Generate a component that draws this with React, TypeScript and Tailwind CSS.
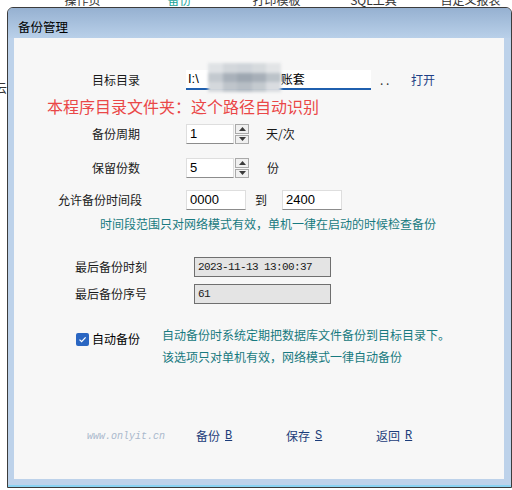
import React from "react";

const tabs = [
  { label: "操作页", active: false },
  { label: "备份", active: true },
  { label: "打印模板", active: false },
  { label: "SQL工具", active: false },
  { label: "自定义报表", active: false },
];

// pixelated cover over the private part of the path
const mosaic = [
  "#dfe2e5", "#d3d7db", "#cfd4d9", "#d6dadd", "#e2e4e6",
  "#c3c9cf", "#a9b1ba", "#9ea7b1", "#a7afb8", "#bcc3c9",
  "#d4d8dc", "#bfc5cb", "#b7bec5", "#c4cacf", "#d9dce0",
];

function SpinBox({ value }: { value: string }) {
  return (
    <div className="flex h-[20px] items-stretch">
      <div className="flex w-[48px] items-center border border-[#dedede] border-b-[#8c8c8c] bg-white pl-[3px] font-['Liberation_Sans',sans-serif] text-[13px] text-black">
        {value}
      </div>
      <div className="ml-[1px] flex w-[14px] flex-col gap-[1px]">
        <div className="flex flex-1 items-center justify-center border border-[#a9a9a9] bg-[#f0f0f0]">
          <svg width="7" height="4" viewBox="0 0 7 4">
            <path d="M3.5 0 7 4H0z" fill="#3a3a3a" />
          </svg>
        </div>
        <div className="flex flex-1 items-center justify-center border border-[#a9a9a9] bg-[#f0f0f0]">
          <svg width="7" height="4" viewBox="0 0 7 4">
            <path d="M0 0h7L3.5 4z" fill="#3a3a3a" />
          </svg>
        </div>
      </div>
    </div>
  );
}

function TextBox({ value }: { value: string }) {
  return (
    <div className="flex h-[20px] w-[60px] items-center border border-[#dedede] border-b-[#8c8c8c] bg-white pl-[3px] font-['Liberation_Sans',sans-serif] text-[13px] text-black">
      {value}
    </div>
  );
}

function ReadOnly({ value }: { value: string }) {
  return (
    <div className="flex h-[20px] w-[137px] items-center border border-[#6f6f6f] bg-[#e4e4e4] pl-[3px] font-['Liberation_Mono',monospace] text-[11px] tracking-[-0.6px] text-[#1a1a1a]">
      {value}
    </div>
  );
}

function Action({ label, hotkey }: { label: string; hotkey: string }) {
  return (
    <span className="flex w-[90px] shrink-0 items-center text-[#1c3d7a]">
      {label}
      <span className="ml-[5px] font-['Liberation_Mono',monospace] underline">{hotkey}</span>
    </span>
  );
}

function BackupDialog() {
  return (
    <div className="flex h-[481px] w-[505px] flex-col overflow-hidden rounded-t-[6px] border border-[#3c3c3c] bg-[#bed3ea]">
      <div className="h-[30px] shrink-0 bg-gradient-to-b from-[#96b1d1] to-[#b9d0e9] pl-[10px] pt-[12px] text-[12.5px] leading-[14px] text-black">
        备份管理
      </div>

      <div className="flex flex-1">
        <div className="w-[6px] bg-[#bdd2ea]" />

        <div className="flex h-[441px] w-[490px] flex-col bg-[#f7f7f7]">
          {/* target folder */}
          <div className="mt-[32px] flex h-[20px] items-center">
            <span className="ml-[78px] w-[94px] shrink-0">目标目录</span>
            <div className="relative flex h-[20px] w-[185px] items-center border-b-2 border-[#1f5fae] bg-white pl-[2px] text-black">
              <span className="font-['Liberation_Sans',sans-serif] text-[13px]">I:\</span>
              <span className="w-[82px] shrink-0" />
              <span>账套</span>
              <div className="absolute -top-[7px] left-[22px] grid h-[29px] w-[73px] grid-cols-5 grid-rows-3 blur-[1.5px]">
                {mosaic.map((c, i) => (
                  <div key={i} style={{ backgroundColor: c }} />
                ))}
              </div>
            </div>
            <span className="ml-[9px] w-[31px] shrink-0 text-[#333]">. .</span>
            <span className="text-[#1f3f86]">打开</span>
          </div>

          <div className="mt-[6px] h-[20px] pl-[33px] text-[16px] leading-[20px] text-[#ea4747]">
            本程序目录文件夹：这个路径自动识别
          </div>

          {/* backup interval */}
          <div className="mt-[8px] flex h-[20px] items-center">
            <span className="ml-[78px] w-[94px] shrink-0">备份周期</span>
            <SpinBox value="1" />
            <span className="ml-[17px]">天/次</span>
          </div>

          {/* copies kept */}
          <div className="mt-[14px] flex h-[20px] items-center">
            <span className="ml-[78px] w-[94px] shrink-0">保留份数</span>
            <SpinBox value="5" />
            <span className="ml-[18px]">份</span>
          </div>

          {/* allowed time window */}
          <div className="mt-[12px] flex h-[20px] items-center">
            <span className="ml-[44px] w-[128px] shrink-0">允许备份时间段</span>
            <TextBox value="0000" />
            <span className="ml-[9px]">到</span>
            <span className="ml-[15px]">
              <TextBox value="2400" />
            </span>
          </div>

          <div className="mt-[5px] h-[18px] pl-[86px] leading-[18px] text-[#177a80]">
            时间段范围只对网络模式有效，单机一律在启动的时候检查备份
          </div>

          <div className="mt-[24px] flex h-[20px] items-center">
            <span className="ml-[61px] w-[119px] shrink-0">最后备份时刻</span>
            <ReadOnly value="2023-11-13 13:00:37" />
          </div>

          <div className="mt-[7px] flex h-[20px] items-center">
            <span className="ml-[61px] w-[119px] shrink-0">最后备份序号</span>
            <ReadOnly value="61" />
          </div>

          {/* auto backup */}
          <div className="mt-[20px] flex items-start">
            <div className="ml-[62px] mt-[8px] flex h-[14px] items-center">
              <span className="flex h-[13px] w-[13px] items-center justify-center rounded-[2px] bg-[#2a66c2]">
                <svg width="9" height="9" viewBox="0 0 9 9">
                  <path d="M1.5 4.6 3.6 6.6 7.6 2.4" fill="none" stroke="#fff" strokeWidth="1.3" />
                </svg>
              </span>
              <span className="ml-[3px] text-black">自动备份</span>
            </div>
            <div className="ml-[22px] leading-[22px] text-[#177a80]">
              <div>自动备份时系统定期把数据库文件备份到目标目录下。</div>
              <div>该选项只对单机有效，网络模式一律自动备份</div>
            </div>
          </div>

          {/* footer actions */}
          <div className="mt-[58px] flex h-[20px] items-center">
            <span className="ml-[73px] w-[109px] shrink-0 font-['Liberation_Mono',monospace] text-[10px] italic text-[#a9b8cc]">
              www.onlyit.cn
            </span>
            <Action label="备份" hotkey="B" />
            <Action label="保存" hotkey="S" />
            <Action label="返回" hotkey="R" />
          </div>
        </div>

        <div className="w-[7px] bg-[#bdd2ea]" />
      </div>

      <div className="flex h-[8px] shrink-0 flex-col">
        <div className="h-[6px] bg-[#bdd2ea]" />
        <div className="h-[2px] bg-[#8ad3f2]" />
      </div>
    </div>
  );
}

export default function App() {
  return (
    <div className="h-[490px] w-[512px] overflow-hidden bg-white font-['Noto_Sans_CJK_SC',sans-serif] text-[12px] text-[#1a1a1a]">
      {/* tab strip of the main window, mostly covered */}
      <div className="flex h-[7px] items-end overflow-hidden pl-[34px]">
        {tabs.map((t) => (
          <span
            key={t.label}
            className={`block h-[14px] w-[97px] shrink-0 text-center leading-[14px] ${
              t.active ? "text-[#1aa39a]" : "text-[#333]"
            }`}
          >
            {t.label}
          </span>
        ))}
      </div>
      <div className="flex">
        <div className="w-[7px] shrink-0 overflow-hidden pt-[74px]">
          <span className="-ml-[5px] block leading-[14px] text-[#333]">云</span>
        </div>
        <BackupDialog />
      </div>
    </div>
  );
}
